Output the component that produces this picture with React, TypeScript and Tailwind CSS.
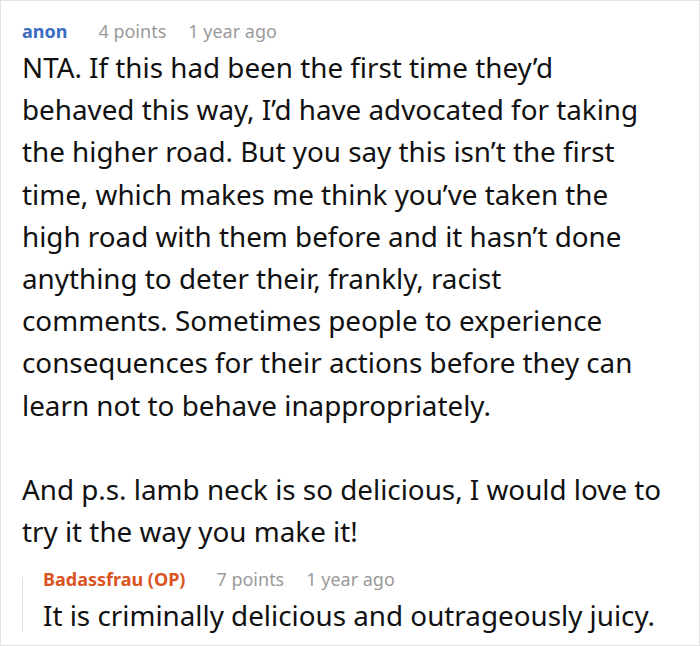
export default function App() {
  return (
    <div className="w-[700px] h-[646px] border border-[#e2e2e2] bg-white overflow-hidden" style={{ fontFamily: '"Noto Sans", "Open Sans", sans-serif' }}>
      <div className="pl-[21px] pr-[16px] pt-[15px]">
        <div className="flex items-center h-[30px] text-[18px]">
          <span className="font-bold text-[#3b6cc2]">anon</span>
          <span className="ml-[31px] text-[#9a9a9a]">4 points</span>
          <span className="ml-[22px] text-[#9a9a9a]">1 year ago</span>
        </div>
        <div className="text-[27.8px] leading-[42.2px] text-[#111]">
          <p>
            NTA. If this had been the first time they’d<br />
            behaved this way, I’d have advocated for taking<br />
            the higher road. But you say this isn’t the first<br />
            time, which makes me think you’ve taken the<br />
            high road with them before and it hasn’t done<br />
            anything to deter their, frankly, racist<br />
            comments. Sometimes people to experience<br />
            consequences for their actions before they can<br />
            learn not to behave inappropriately.
          </p>
          <p className="mt-[42.2px]">
            And p.s. lamb neck is so delicious, I would love to<br />
            try it the way you make it!
          </p>
        </div>
        <div className="mt-[12px] flex">
          <div className="w-[1px] bg-[#dedede] mt-[13px] mb-[4px]" />
          <div className="pl-[20px]">
            <div className="flex items-center h-[30px] text-[18px]">
              <span className="font-bold text-[#d9541f]">Badassfrau (OP)</span>
              <span className="ml-[31px] text-[#9a9a9a]">7 points</span>
              <span className="ml-[22px] text-[#9a9a9a]">1 year ago</span>
            </div>
            <div className="text-[27.8px] leading-[42px] text-[#111]">It is criminally delicious and outrageously juicy.</div>
          </div>
        </div>
      </div>
    </div>
  );
}
